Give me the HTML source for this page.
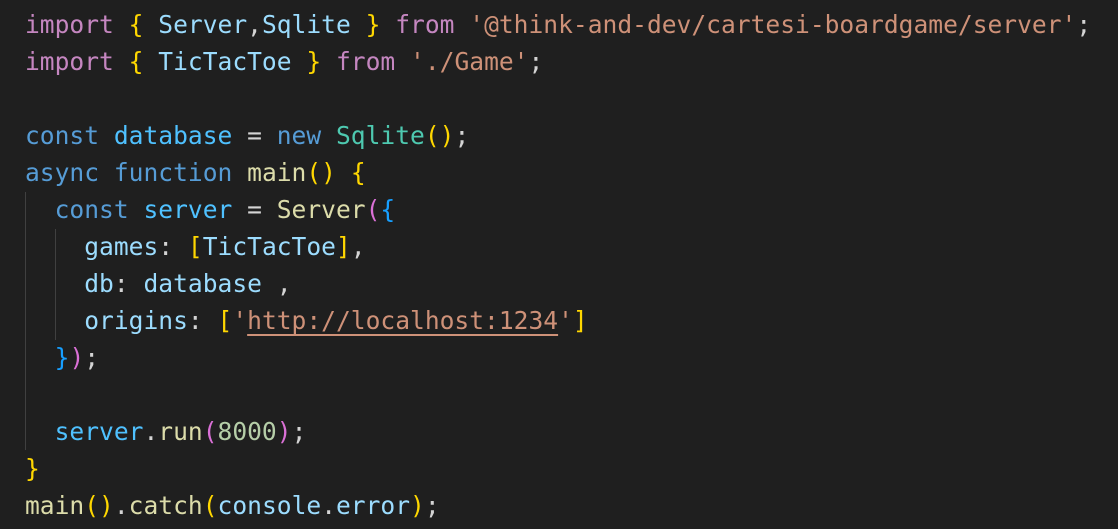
<!DOCTYPE html>
<html><head><style>
html,body{margin:0;padding:0;background:#1f1f1f;width:1118px;height:529px;overflow:hidden}
pre{position:absolute;left:25px;top:6px;margin:0;font-family:"DejaVu Sans Mono","Liberation Mono",monospace;font-size:24.6px;line-height:37px;color:#d4d4d4;white-space:pre}
.k{color:#c586c0}.b{color:#569cd6}.v{color:#9cdcfe}.c{color:#4fc1ff}.t{color:#4ec9b0}.s{color:#ce9178}.f{color:#dcdcaa}.n{color:#b5cea8}
.y{color:#ffd700}.p{color:#da70d6}.bl{color:#179fff}
.u{text-decoration:underline;text-underline-offset:5px}
.g{position:absolute;width:1px;background:#404040}
</style></head><body>
<div class="g" style="left:25px;top:192px;height:258px"></div>
<div class="g" style="left:55px;top:229px;height:111px"></div>
<pre><span class="k">import</span> <span class="y">{</span> <span class="v">Server</span>,<span class="v">Sqlite</span> <span class="y">}</span> <span class="k">from</span> <span class="s">'@think-and-dev/cartesi-boardgame/server'</span>;
<span class="k">import</span> <span class="y">{</span> <span class="v">TicTacToe</span> <span class="y">}</span> <span class="k">from</span> <span class="s">'./Game'</span>;

<span class="b">const</span> <span class="c">database</span> = <span class="b">new</span> <span class="t">Sqlite</span><span class="y">()</span>;
<span class="b">async</span> <span class="b">function</span> <span class="f">main</span><span class="y">()</span> <span class="y">{</span>
  <span class="b">const</span> <span class="c">server</span> = <span class="f">Server</span><span class="p">(</span><span class="bl">{</span>
    <span class="v">games</span>: <span class="y">[</span><span class="v">TicTacToe</span><span class="y">]</span>,
    <span class="v">db</span>: <span class="v">database</span> ,
    <span class="v">origins</span>: <span class="y">[</span><span class="s">'<span class="u">http://localhost:1234</span>'</span><span class="y">]</span>
  <span class="bl">}</span><span class="p">)</span>;

  <span class="c">server</span>.<span class="f">run</span><span class="p">(</span><span class="n">8000</span><span class="p">)</span>;
<span class="y">}</span>
<span class="f">main</span><span class="y">()</span>.<span class="f">catch</span><span class="y">(</span><span class="v">console</span>.<span class="v">error</span><span class="y">)</span>;</pre>
</body></html>
